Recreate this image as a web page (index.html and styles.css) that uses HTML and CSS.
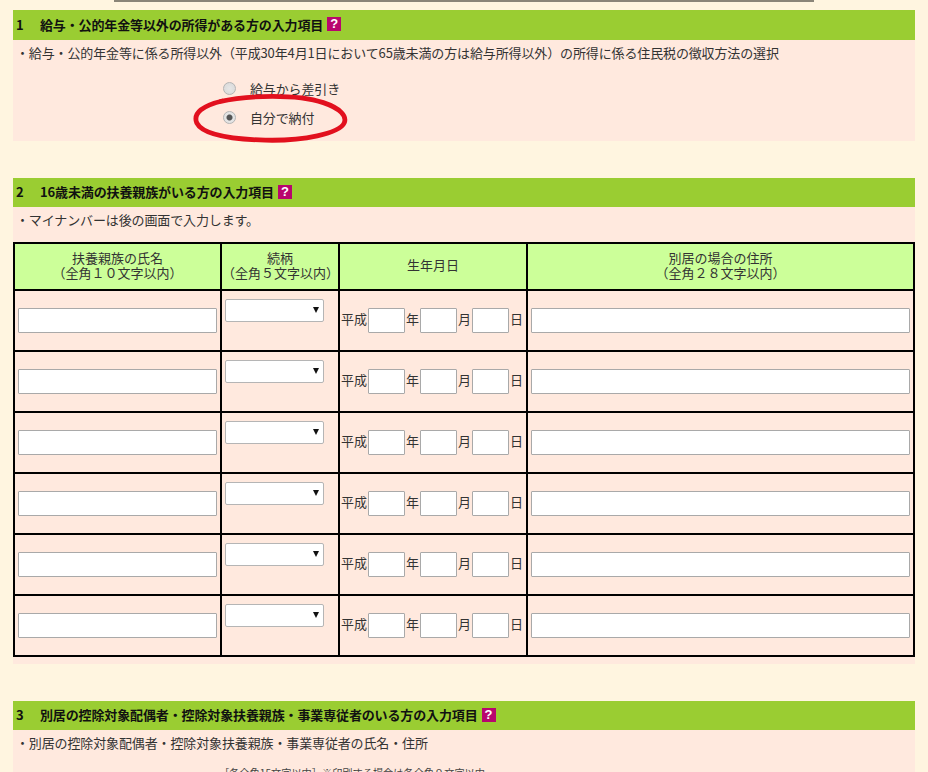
FILE: index.html
```html
<!DOCTYPE html>
<html lang="ja">
<head>
    <meta charset="UTF-8">
    <meta name="viewport" content="width=device-width, initial-scale=1.0">
    <title>入力項目</title>
    <link rel="stylesheet" href="styles.css">
</head>
<body>
    <div class="top-rule"></div>

    <section class="sec sec-1">
        <h2 class="sec-title"><span class="sec-no">1</span>給与・公的年金等以外の所得がある方の入力項目<span class="help">?</span></h2>
        <p class="sec-note">・給与・公的年金等に係る所得以外（平成30年4月1日において65歳未満の方は給与所得以外）の所得に係る住民税の徴収方法の選択</p>
        <div class="radio-group">
            <label class="radio-row"><input type="radio" name="pay">給与から差引き</label>
            <label class="radio-row"><input type="radio" name="pay" checked>自分で納付</label>
            <svg class="circle-mark" width="158" height="50" viewBox="0 0 166 52" preserveAspectRatio="none">
                <path d="M30 8 C60 1 112 0 139 9 C157 15 164 23 161 30 C156 41 118 49 78 48 C42 47 12 42 6 30 C2 20 12 12 34 7" fill="none" stroke="#e2101e" stroke-width="5"/>
            </svg>
        </div>
    </section>

    <section class="sec sec-2">
        <h2 class="sec-title"><span class="sec-no">2</span>16歳未満の扶養親族がいる方の入力項目<span class="help">?</span></h2>
        <p class="sec-note">・マイナンバーは後の画面で入力します。</p>
        <table class="dep-table">
            <thead>
                <tr>
                    <th class="col-name">扶養親族の氏名<br>（全角１０文字以内）</th>
                    <th class="col-rel">続柄<br>（全角５文字以内）</th>
                    <th class="col-date">生年月日</th>
                    <th>別居の場合の住所<br>（全角２８文字以内）</th>
                </tr>
            </thead>
            <tbody id="depRows"></tbody>
        </table>
    </section>

    <section class="sec sec-3">
        <h2 class="sec-title"><span class="sec-no">3</span>別居の控除対象配偶者・控除対象扶養親族・事業専従者のいる方の入力項目<span class="help">?</span></h2>
        <p class="sec-note">・別居の控除対象配偶者・控除対象扶養親族・事業専従者の氏名・住所</p>
        <p class="sec-small">［各全角15文字以内］※印刷する場合は各全角９文字以内</p>
    </section>

    <script>
        const depRows = document.getElementById('depRows');
        for (let i = 0; i < 6; i++) {
            const tr = document.createElement('tr');
            tr.innerHTML = `
                <td><input type="text" class="txt txt-full"></td>
                <td class="cell-rel"><span class="sel-wrap"><select class="sel"></select></span></td>
                <td><span class="date-row">平成<input type="text" class="txt txt-date">年<input type="text" class="txt txt-date">月<input type="text" class="txt txt-date">日</span></td>
                <td><input type="text" class="txt txt-full"></td>
            `;
            depRows.appendChild(tr);
        }
    </script>
</body>
</html>
```

FILE: styles.css
```css
/* Base Styles */
html, body {
    height: 772px;
    overflow: hidden;
}

body {
    margin: 0;
    padding: 0 13px;
    background-color: #fff5e0;
    color: #333;
    font-family: "Noto Sans CJK JP", "Noto Sans", sans-serif;
    font-size: 13px;
    line-height: 15px;
}

.top-rule {
    width: 700px;
    height: 2px;
    margin: 0 auto;
    background-color: #8a8578;
}

.sec {
    background-color: #ffe9de;
}

.sec-1 {
    margin-top: 8px;
    height: 131px;
}

.sec-2 {
    margin-top: 37px;
    height: 486px;
}

.sec-3 {
    margin-top: 37px;
    height: 80px;
}

.sec-title {
    box-sizing: border-box;
    display: flex;
    align-items: center;
    height: 30px;
    margin: 0;
    padding: 0 0 2px 3px;
    background-color: #9acd32;
    color: #111;
    font-size: 13px;
    font-weight: 700;
    letter-spacing: -0.13px;
}

.sec-2 .sec-title,
.sec-3 .sec-title {
    height: 29px;
}

.sec-no {
    width: 24px;
}

.help {
    width: 14px;
    height: 14px;
    margin-left: 4px;
    background-color: #b8066e;
    color: #fff;
    font-family: "Liberation Sans", sans-serif;
    font-size: 13px;
    font-weight: 700;
    line-height: 14px;
    letter-spacing: 0;
    text-align: center;
}

.sec-note {
    margin: 0;
    padding: 5px 0 0 3px;
    letter-spacing: -0.13px;
}

.sec-small {
    margin: 15px 0 0 206px;
    font-size: 10.2px;
    color: #444;
}

/* Radios */
.radio-group {
    position: relative;
    margin: 14px 0 0 210px;
    letter-spacing: -0.13px;
}

.radio-row {
    display: flex;
    align-items: center;
    height: 29px;
}

.radio-row input {
    appearance: none;
    width: 13px;
    height: 13px;
    margin: 0 14px 0 0;
    border: 1px solid #b4b4b4;
    border-radius: 50%;
    background: radial-gradient(circle, #e6e6e6, #d8d8d8);
}

.radio-row input:checked {
    background: radial-gradient(circle, #555 0, #555 2.5px, #e4e4e4 3.5px);
}

.circle-mark {
    position: absolute;
    top: 20px;
    left: -32px;
}

/* Table */
.dep-table {
    width: 902px;
    margin-top: 15px;
    border-collapse: collapse;
    table-layout: fixed;
}

.dep-table th,
.dep-table td {
    padding: 0;
    border: 2px solid #000;
}

.dep-table th {
    height: 41px;
    padding-bottom: 4px;
    background-color: #ccff99;
    font-weight: 400;
    text-align: center;
}

.dep-table td {
    height: 59px;
    text-align: center;
}

.col-name {
    width: 205px;
}

.col-rel {
    width: 116px;
}

.col-date {
    width: 186px;
}

.txt {
    box-sizing: border-box;
    height: 25px;
    padding: 0;
    border: 1px solid #a9a9a9;
    border-radius: 1px;
    background-color: #fff;
    vertical-align: middle;
}

.txt-full {
    display: block;
    width: calc(100% - 6px);
    margin: 0 3px;
}

.txt-date {
    width: 37px;
    margin: 4px 1px 0;
}

.date-row {
    display: flex;
    align-items: center;
    justify-content: center;
    margin-bottom: 4px;
    padding-right: 2px;
    white-space: nowrap;
}

.cell-rel {
    vertical-align: top;
}

.sel-wrap {
    position: relative;
    display: block;
    width: 99px;
    margin: 8px 0 0 3px;
}

.sel-wrap::after {
    content: "";
    position: absolute;
    top: 8px;
    right: 5px;
    border-top: 6px solid #111;
    border-left: 3px solid transparent;
    border-right: 3px solid transparent;
}

.sel {
    display: block;
    appearance: none;
    box-sizing: border-box;
    width: 99px;
    height: 23px;
    padding: 0;
    border: 1px solid #b5b5b5;
    border-radius: 2px;
    background-color: #fff;
}
```
